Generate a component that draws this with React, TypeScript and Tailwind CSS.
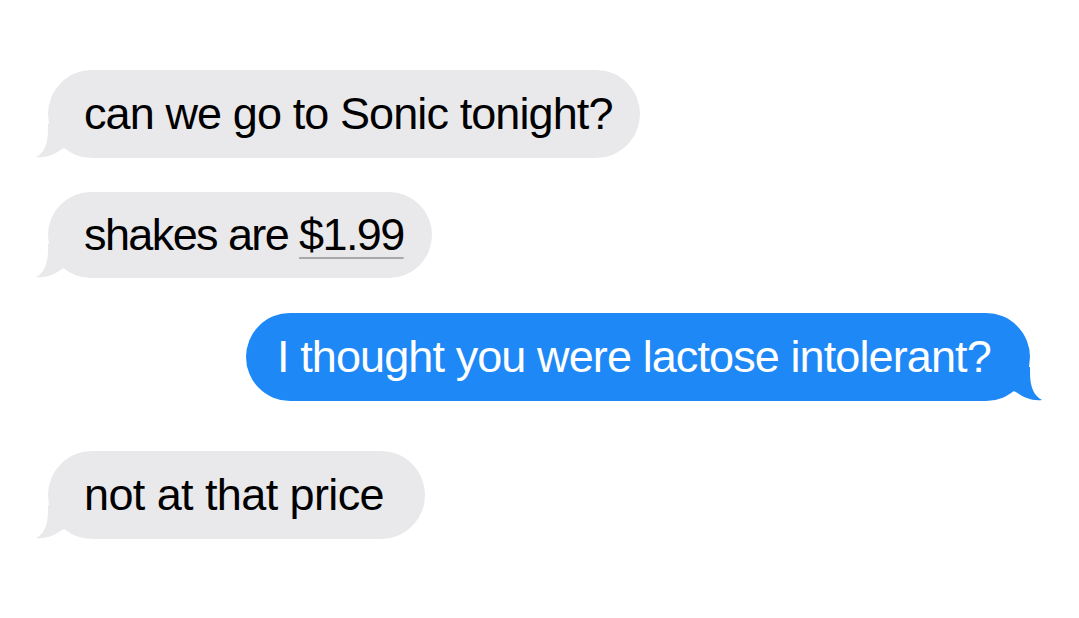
import React from "react";

const GRAY = "#e9e9eb";
const BLUE = "#1e88f7";

function LeftTail() {
  return (
    <svg
      className="absolute left-[-12px] bottom-0"
      width="40"
      height="34"
      viewBox="0 0 40 34"
    >
      <path
        d="M12,0 L12,6 C12,20 8,29 0,33 C9,34 18,31 26,25 L40,20 L40,0 Z"
        fill={GRAY}
      />
    </svg>
  );
}

function RightTail() {
  return (
    <svg
      className="absolute right-[-12px] bottom-0"
      width="40"
      height="34"
      viewBox="0 0 40 34"
    >
      <path
        d="M28,0 L28,6 C28,20 32,29 40,33 C31,34 22,31 14,25 L0,20 L0,0 Z"
        fill={BLUE}
      />
    </svg>
  );
}

export default function App() {
  return (
    <div
      className="w-[1079px] h-[618px] bg-white overflow-hidden flex flex-col pt-[70px] pl-[48px] pr-[49px] text-[45px] tracking-[-0.9px] leading-none"
      style={{ fontFamily: '"Liberation Sans", Arial, sans-serif' }}
    >
      <div className="relative w-[592px]">
        <LeftTail />
        <div className="relative h-[88px] rounded-[44px] bg-[#e9e9eb] pl-[36px] flex items-center text-black whitespace-nowrap">
          <span className="pb-[2px]">can we go to Sonic tonight?</span>
        </div>
      </div>
      <div className="h-[34px]" />
      <div className="relative w-[384px]">
        <LeftTail />
        <div className="relative h-[86px] rounded-[43px] bg-[#e9e9eb] pl-[36px] flex items-center text-black whitespace-nowrap tracking-[-1.6px]">
          <span className="pb-[2px]">
            shakes are{" "}
            <span className="underline decoration-[#a8a8a8] decoration-2 underline-offset-[7px]">
              $1.99
            </span>
          </span>
        </div>
      </div>
      <div className="h-[35px]" />
      <div className="relative w-[784px] self-end">
        <RightTail />
        <div className="relative h-[88px] rounded-[44px] bg-[#1e88f7] pl-[31px] flex items-center text-white whitespace-nowrap">
          <span className="pb-[2px]">I thought you were lactose intolerant?</span>
        </div>
      </div>
      <div className="h-[50px]" />
      <div className="relative w-[377px]">
        <LeftTail />
        <div className="relative h-[88px] rounded-[44px] bg-[#e9e9eb] pl-[36px] flex items-center text-black whitespace-nowrap tracking-[-0.6px]">
          <span className="pb-[2px]">not at that price</span>
        </div>
      </div>
    </div>
  );
}
